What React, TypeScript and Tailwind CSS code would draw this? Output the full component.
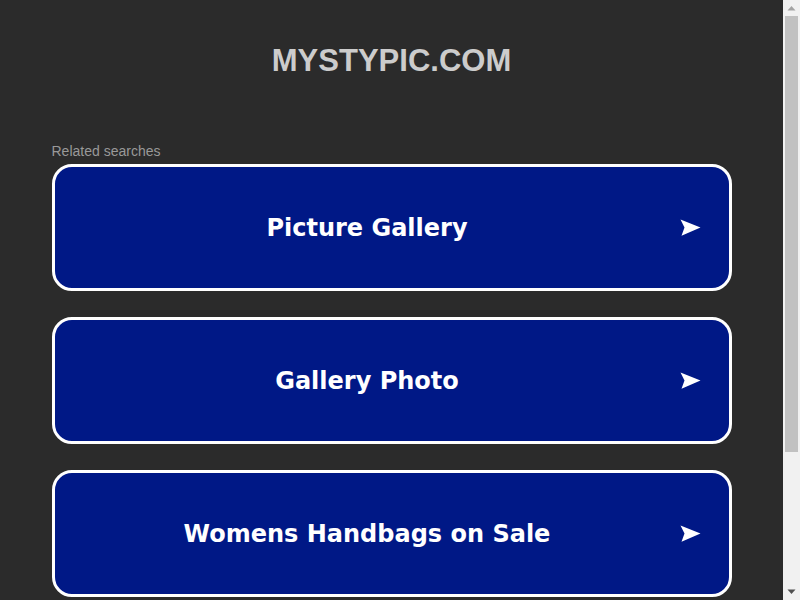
import React from "react";

const searches = ["Picture Gallery", "Gallery Photo", "Womens Handbags on Sale"];

function Arrow() {
  return (
    <svg width="21" height="17" viewBox="0 0 21 17" className="block">
      <path d="M0.5 0.5 L20.5 8.5 L1.5 16.8 L4.5 8.6 Z" fill="#ffffff" />
    </svg>
  );
}

// the browser scrollbar of the reference, drawn as a plain strip
function Scrollbar() {
  return (
    <div className="w-[17px] h-full bg-[#f1f1f1] flex flex-col items-center">
      <svg width="9" height="16" viewBox="0 0 9 16" className="block">
        <path d="M0.5 10.5 L4.5 6 L8.5 10.5 Z" fill="#a3a3a3" />
      </svg>
      <div className="w-[13px] h-[436px] bg-[#c1c1c1]" />
      <div className="flex-1" />
      <svg width="9" height="15" viewBox="0 0 9 15" className="block">
        <path d="M0.5 4.5 L4.5 9 L8.5 4.5 Z" fill="#505050" />
      </svg>
    </div>
  );
}

export default function App() {
  return (
    <div
      className="h-[600px] overflow-hidden flex bg-[#2b2b2b]"
      style={{ fontFamily: '"Liberation Sans", Arial, sans-serif' }}
    >
      <div className="flex-1">
        <div className="w-[680px] mx-auto">
          <h1 className="pt-[44px] text-center text-[31px] leading-[34px] font-bold text-[#cccccc]">
            MYSTYPIC.COM
          </h1>
          <p className="mt-[65px] text-[14px] leading-[16px] text-[#999999]">
            Related searches
          </p>
          <div className="mt-[5px] flex flex-col gap-[26px]">
            {searches.map((s) => (
              <a
                key={s}
                href="#"
                className="flex items-center h-[127px] rounded-[20px] border-[3px] border-white bg-[#001886] text-white"
              >
                <span className="flex-1 text-center text-[24px] font-bold font-['DejaVu_Sans',Verdana,sans-serif]">
                  {s}
                </span>
                <span className="w-[21px] mr-[28px]">
                  <Arrow />
                </span>
              </a>
            ))}
          </div>
        </div>
      </div>
      <Scrollbar />
    </div>
  );
}
